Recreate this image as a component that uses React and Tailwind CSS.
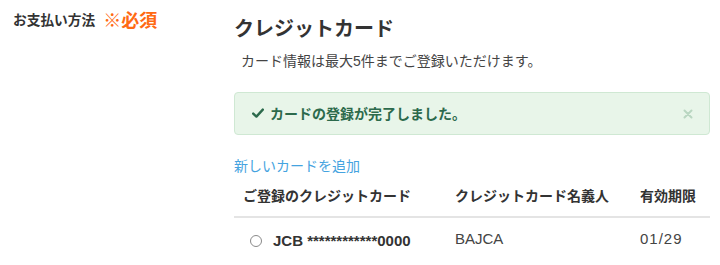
import React from 'react';

const jp = { fontFamily: '"Liberation Sans", "Noto Sans CJK JP", sans-serif' };

export default function App() {
  return (
    <div className="flex w-[720px] h-[265px] bg-white text-[#333]" style={jp}>
      {/* Left label */}
      <div className="w-[234px] shrink-0 pl-[13px] pt-[11px]">
        <div className="flex items-center leading-[20px]">
          <span className="text-[13.7px] font-bold text-[#333]">お支払い方法</span>
          <span className="ml-[8px] text-[18px] font-bold text-[#ff6a13]">※必須</span>
        </div>
      </div>

      {/* Right content */}
      <div className="flex-1 pr-[10px] pt-[15px]">
        <h2 className="text-[20px] font-bold leading-[28px] text-[#333]">クレジットカード</h2>
        <p className="mt-[8px] pl-[7px] text-[14px] leading-[20px] text-[#444]">
          カード情報は最大5件までご登録いただけます。
        </p>

        {/* Success alert */}
        <div className="mt-[21px] h-[43px] flex items-center justify-between rounded-[4px] border border-[#cfe8d3] bg-[#e8f5e9] pl-[17px] pr-[16px]">
          <div className="flex items-center">
            <svg width="12" height="11" viewBox="0 0 12 11" className="mr-[6px]">
              <path d="M1.2 5.6 L4.4 8.6 L10.8 1.6" fill="none" stroke="#2c6a4c" strokeWidth="2.4" strokeLinecap="round" strokeLinejoin="round" />
            </svg>
            <span className="text-[14px] font-bold leading-[20px] text-[#2c6a4c]">カードの登録が完了しました。</span>
          </div>
          <svg width="10" height="10" viewBox="0 0 10 10">
            <path d="M1.5 1.5 L8.5 8.5 M8.5 1.5 L1.5 8.5" stroke="#b9d6c1" strokeWidth="2" strokeLinecap="round" />
          </svg>
        </div>

        <a className="mt-[21px] block text-[14px] leading-[20px] text-[#45a3e0]">新しいカードを追加</a>

        {/* Cards table */}
        <div className="grid grid-cols-[212px_185px_1fr] text-[14px] leading-[20px]">
          <div className="pl-[9px] pt-[10px] pb-[10px] font-bold border-b-2 border-[#e4e4e4]">ご登録のクレジットカード</div>
          <div className="pl-[9px] pt-[10px] pb-[10px] font-bold border-b-2 border-[#e4e4e4]">クレジットカード名義人</div>
          <div className="pl-[9px] pt-[10px] pb-[10px] font-bold border-b-2 border-[#e4e4e4]">有効期限</div>

          <div className="pl-[16px] pt-[13px] flex items-center">
            <span className="w-[12px] h-[12px] rounded-full border border-[#8a8a8a] bg-white shrink-0" />
            <span className="ml-[11px] text-[15px] font-bold text-[#333]">JCB ************0000</span>
          </div>
          <div className="pl-[9px] pt-[11px] text-[15px] text-[#444]">BAJCA</div>
          <div className="pl-[9px] pt-[11px] text-[15px] tracking-[1px] text-[#444]">01/29</div>
        </div>
      </div>
    </div>
  );
}
